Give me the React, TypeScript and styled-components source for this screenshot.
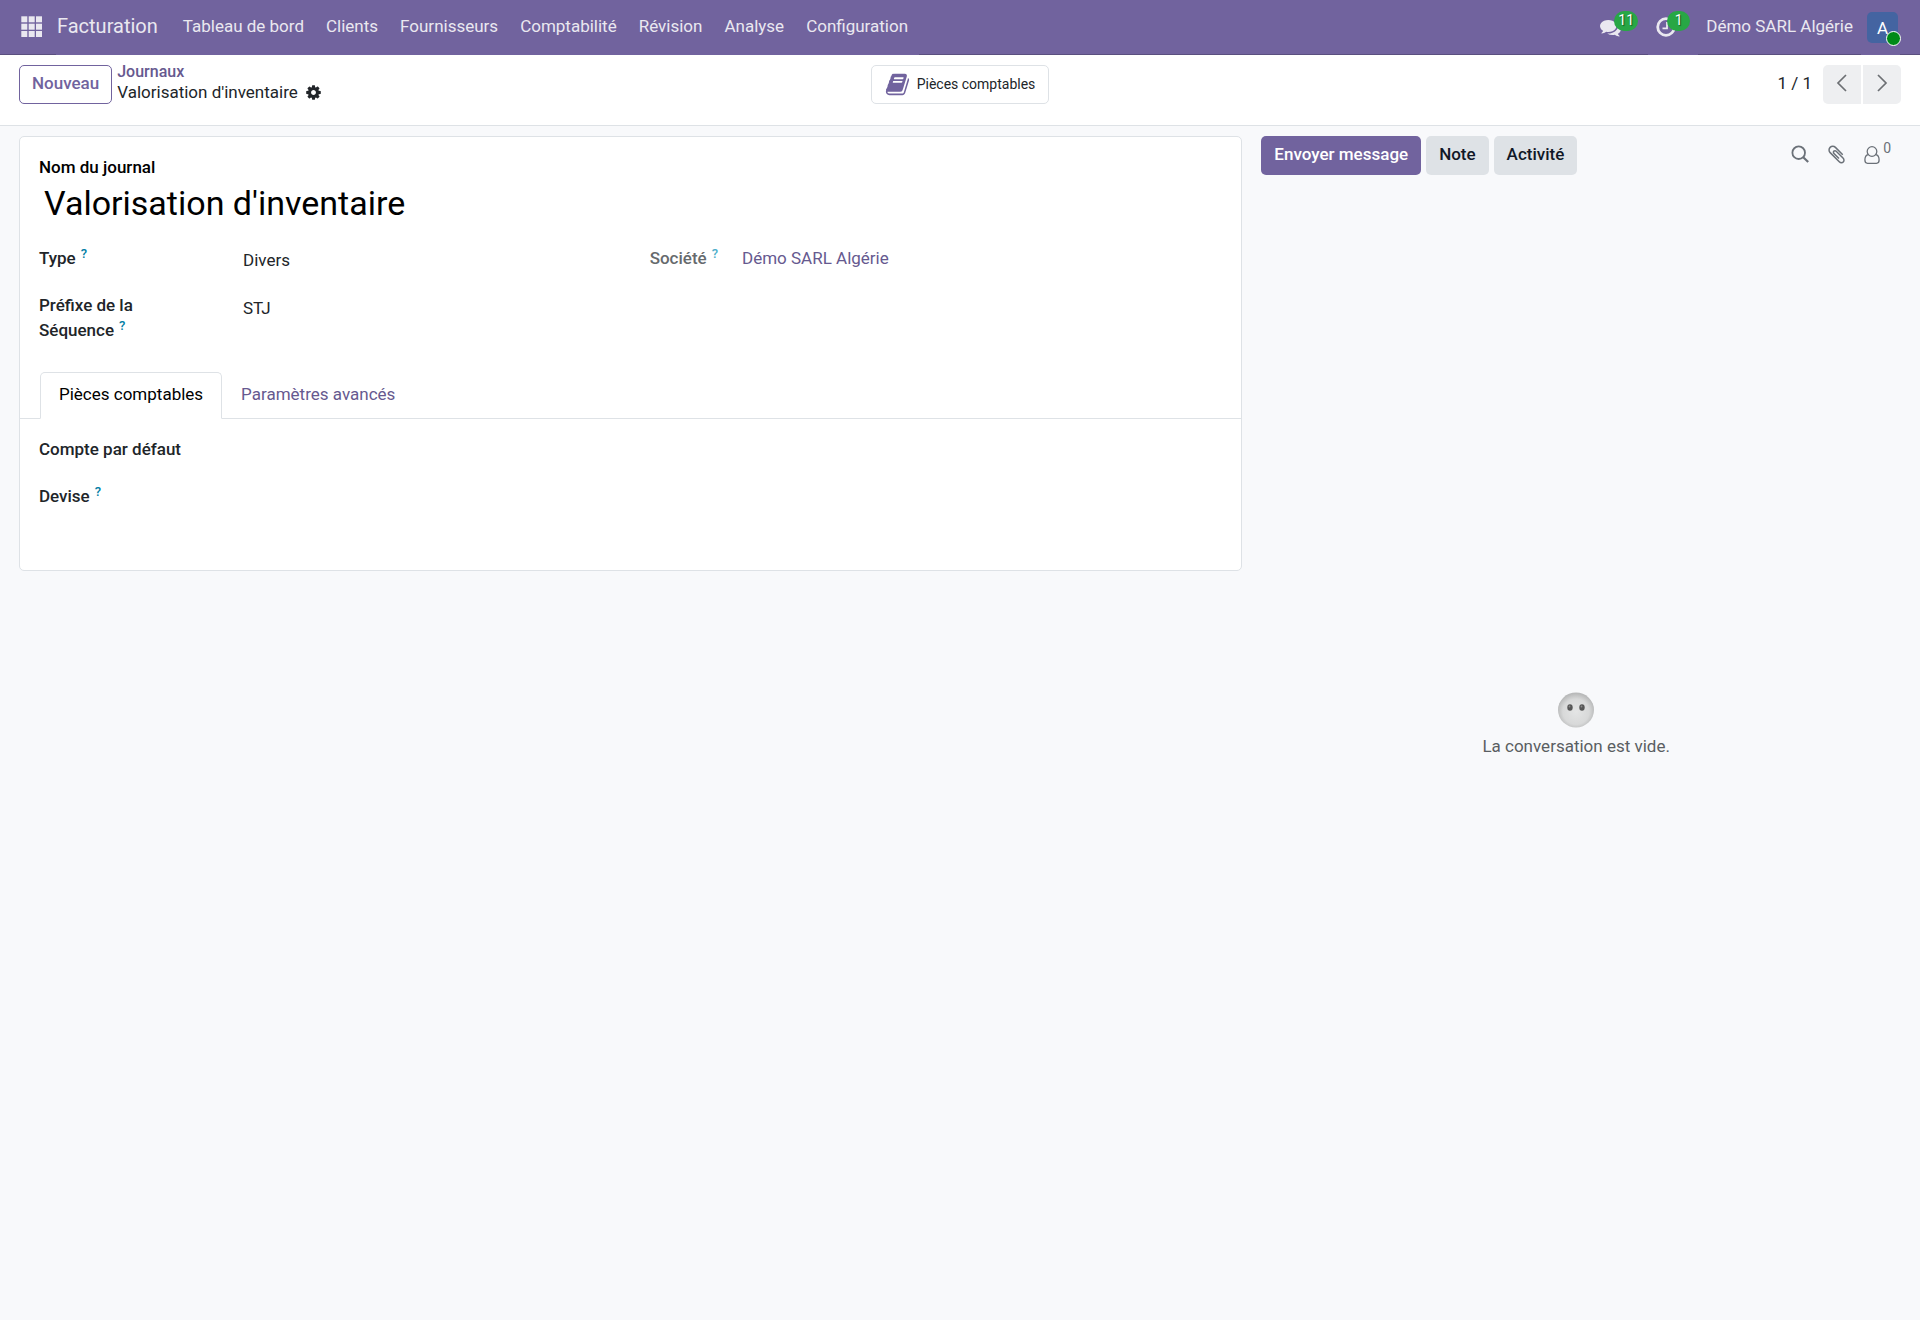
import React from "react";
import styled, { createGlobalStyle } from "styled-components";

const c = {
  brand: "#71639e",
  brandDark: "#5a4f7f",
  link: "#66598f",
  navText: "#eae8f0",
  border: "#dee2e6",
  canvas: "#f8f9fb",
  text: "#212529",
  strong: "#111827",
  green: "#28a745",
};

const GlobalStyle = createGlobalStyle`
  *, *::before, *::after { box-sizing: border-box; }
  body {
    margin: 0;
    background: ${c.canvas};
    color: ${c.text};
    font-family: Roboto, "Liberation Sans", sans-serif;
    font-size: 17px;
    line-height: 25px;
  }
  button, input, select { font: inherit; color: inherit; margin: 0; }
  button { cursor: pointer; }
  a { text-decoration: none; color: ${c.link}; }
  svg { display: block; flex: none; }
`;

const Page = styled.div`
  display: flex;
  flex-direction: column;
  min-height: 100vh;
`;

/* ---------- top navigation ---------- */

const Navbar = styled.nav`
  display: flex;
  height: 55px;
  padding: 0 20px;
  background: ${c.brand};
  box-shadow: inset 0 -1px ${c.brandDark};
`;

const NavButton = styled.button<{ $filled?: boolean }>`
  display: flex;
  align-items: center;
  padding: 0;
  border: 0;
  color: ${c.navText};
  background: ${(p) => (p.$filled ? c.brand : "transparent")};
`;

const AppsButton = styled(NavButton)`
  width: 36px;
  padding-bottom: 2px;
`;

const NavLink = styled.a<{ $brand?: boolean }>`
  display: flex;
  align-items: center;
  padding: ${(p) => (p.$brand ? "0 14px 2px 1px" : "0 11px 2px")};
  font-size: ${(p) => (p.$brand ? 20 : 17)}px;
  color: ${c.navText};
  background: ${c.brand};
`;

const NavRight = styled.div`
  display: flex;
  margin-left: auto;
`;

const Systray = styled(NavButton)`
  padding: 0 0 1px 8px;
  width: ${(p) => (p.$filled ? 50 : 56)}px;
`;

const IconWithBadge = styled.span`
  position: relative;
  display: block;
`;

const Badge = styled.span<{ $left: number }>`
  position: absolute;
  left: ${(p) => p.$left}px;
  top: -6px;
  min-width: 23px;
  height: 20px;
  padding: 0 4px;
  border-radius: 10px;
  background: ${c.green};
  color: #fff;
  font-size: 14px;
  line-height: 18px;
  text-align: center;
  text-shadow: 1px 1px 1px rgba(0, 0, 0, 0.5);
`;

const CompanyButton = styled(NavButton)`
  padding: 0 8px 2px;
`;

const AvatarButton = styled(NavButton)`
  padding: 0 2px 0 6px;
`;

const Avatar = styled.span`
  position: relative;
  display: block;
  width: 31px;
  height: 31px;
  border-radius: 5px;
  background: #4464a1;
  color: #fff;
  text-align: center;
  line-height: 32px;
`;

const Presence = styled.span`
  position: absolute;
  right: -3px;
  bottom: -3px;
  width: 15px;
  height: 15px;
  border: 1px solid #fff;
  border-radius: 50%;
  background: #008a17;
`;

/* ---------- control panel ---------- */

const ControlPanel = styled.header`
  display: grid;
  grid-template-columns: 1fr auto 1fr;
  align-items: start;
  height: 71px;
  padding: 10px 19px 0;
  background: #fff;
  border-bottom: 1px solid ${c.border};
`;

const PanelLeft = styled.div`
  display: flex;
  align-items: flex-start;
  gap: 5px;
`;

const OutlineButton = styled.button`
  height: 39px;
  padding: 0 12px 2px;
  border: 1px solid ${c.brand};
  border-radius: 5px;
  background: #fff;
  color: ${c.brand};
  font-weight: 500;
`;

const Breadcrumb = styled.div`
  display: flex;
  flex-direction: column;
  line-height: 20px;
  margin-top: -3px;
`;

const CrumbLink = styled.a`
  font-size: 16px;
  font-weight: 500;
`;

const Current = styled.div`
  display: flex;
  align-items: center;
  gap: 7px;
`;

const IconButton = styled.button<{ $color?: string }>`
  display: flex;
  align-items: flex-start;
  padding: 0;
  border: 0;
  background: none;
  color: ${(p) => p.$color || c.text};
`;

const StatButton = styled.button`
  display: flex;
  align-items: center;
  gap: 7px;
  height: 39px;
  padding: 0 13px;
  border: 1px solid ${c.border};
  border-radius: 5px;
  background: #fff;
  font-size: 14px;
  color: ${c.text};
  & > svg { color: ${c.brand}; }
`;

const Pager = styled.div`
  display: flex;
  justify-content: flex-end;
  gap: 2px;
`;

const PagerCount = styled.span`
  padding: 6px 9px 0 0;
`;

const PagerButton = styled.button<{ $side: "left" | "right" }>`
  display: flex;
  align-items: center;
  justify-content: center;
  width: 38px;
  height: 39px;
  padding: 0 0 3px;
  border: 0;
  border-radius: ${(p) => (p.$side === "left" ? "5px 0 0 5px" : "0 5px 5px 0")};
  background: #eeeff1;
  color: #6c6f73;
`;

/* ---------- form ---------- */

const Main = styled.main`
  display: grid;
  grid-template-columns: 11fr 6fr;
  flex: 1;
  padding-top: 10px;
`;

const Sheet = styled.form`
  align-self: start;
  margin-left: 19px;
  padding: 18px 0 61px;
  border: 1px solid ${c.border};
  border-radius: 5px;
  background: #fff;
`;

const TitleBlock = styled.div`
  display: flex;
  flex-direction: column;
  padding: 0 19px;
  color: #000;
`;

const Label = styled.label<{ $muted?: boolean }>`
  font-weight: 500;
  color: ${(p) => (p.$muted ? "#666a6d" : "inherit")};
`;

const TitleInput = styled.input`
  width: 100%;
  height: 46px;
  padding: 0 5px;
  border: 0;
  outline: 0;
  background: transparent;
  font-size: 34px;
`;

const Groups = styled.div<{ $tight?: boolean }>`
  display: grid;
  grid-template-columns: 1fr 1fr;
  gap: 38px;
  padding: ${(p) => (p.$tight ? 18 : 20)}px 19px 0;
`;

const Group = styled.div<{ $compact?: boolean }>`
  display: grid;
  grid-template-columns: ${(p) => (p.$compact ? "auto 1fr" : "160px 1fr")};
  column-gap: ${(p) => (p.$compact ? 24 : 39)}px;
  row-gap: 22px;
  align-content: start;
`;

const Help = styled.sup<{ $muted?: boolean }>`
  margin-left: 5px;
  font-size: 13px;
  line-height: 13px;
  vertical-align: 6px;
  color: ${(p) => (p.$muted ? "#4fafca" : "#0180a5")};
`;

const Input = styled.input`
  width: 100%;
  height: 29px;
  padding: 0 5px;
  border: 0;
  outline: 0;
  background: transparent;
  align-self: start;
  margin-bottom: -4px;
`;

const Select = styled(Input).attrs({ as: "select" })`
  appearance: none;
`;

const Tabs = styled.div`
  display: flex;
  margin-top: 29px;
  padding: 0 20px;
  box-shadow: inset 0 -1px ${c.border};
`;

const Tab = styled.button<{ $active?: boolean }>`
  height: 47px;
  padding: 0 18px 3px;
  border: 1px solid ${(p) => (p.$active ? c.border : "transparent")};
  border-bottom-color: ${(p) => (p.$active ? "#fff" : "transparent")};
  border-radius: 5px 5px 0 0;
  background: ${(p) => (p.$active ? "#fff" : "transparent")};
  color: ${(p) => (p.$active ? "#000" : c.link)};
`;

/* ---------- chatter ---------- */

const Chatter = styled.aside`
  display: flex;
  flex-direction: column;
  padding: 0 29px 0 19px;
`;

const ChatterBar = styled.div`
  display: flex;
  gap: 5px;
`;

const ChatterButton = styled.button<{ $primary?: boolean }>`
  height: 39px;
  padding: 0 13px 3px;
  border: 0;
  border-radius: 5px;
  font-weight: 500;
  color: ${(p) => (p.$primary ? "#fff" : c.strong)};
  background: ${(p) => (p.$primary ? c.brand : c.border)};
`;

const ChatterTools = styled.div`
  display: flex;
  gap: 17px;
  margin-left: auto;
  padding-top: 8px;
`;

const Followers = styled.span`
  margin-left: 3px;
  font-size: 14px;
  line-height: 9px;
`;

const EmptyThread = styled.div`
  display: flex;
  flex: 1;
  flex-direction: column;
  align-items: center;
  justify-content: center;
  gap: 5px;
  padding-bottom: 46px;
  color: #5a5e62;
`;

/* ---------- icons ---------- */

const Glyph = ({ d, size }: { d: string; size: number }) => (
  <svg width={size} height={size} viewBox="0 0 1792 1792" fill="currentColor" aria-hidden="true">
    <path d={d} />
  </svg>
);

const BOOK =
  "M1703 478q40 57 18 129l-275 906q-19 64-76.5 107.5t-122.5 43.5h-923q-77 0-148.5-53.5t-99.5-131.5q-24-67-2-127 0-4 3-27t4-37q1-8-3-21.5t-3-19.5q2-11 8-21t16.5-23.5 16.5-23.5q23-38 45-91.5t30-91.5q3-10 .5-30t-.5-28q3-11 17-28t17-23q21-36 42-92t25-90q1-9-2.5-32t.5-28q4-13 22-30.5t22-22.5q19-26 42.5-84.5t27.5-96.5q1-8-3-25.5t-2-26.5q2-8 9-18t18-23 17-21q8-12 16.5-30.5t15-35 16-36 19.5-32 26.5-23.5 36-11.5 47.5 5.5l-1 3q38-9 51-9h761q74 0 114 56t18 130l-274 906q-36 119-71.5 153.5t-128.5 34.5h-869q-27 0-38 15-11 16-1 43 24 70 144 70h923q29 0 56-15.5t35-41.5l300-987q7-22 5-57 38 15 59 43zm-1064 2q-4 13 2 22.5t20 9.5h608q13 0 25.5-9.5t16.5-22.5l21-64q4-13-2-22.5t-20-9.5h-608q-13 0-25.5 9.5t-16.5 22.5zm-83 256q-4 13 2 22.5t20 9.5h608q13 0 25.5-9.5t16.5-22.5l21-64q4-13-2-22.5t-20-9.5h-608q-13 0-25.5 9.5t-16.5 22.5z";
const COMMENTS =
  "M1408 768q0 139-94 257t-256.5 186.5-353.5 68.5q-86 0-176-16-124 88-278 128-36 9-86 16h-3q-11 0-20.5-8t-11.5-21q-1-3-1-6.5t.5-6.5 2-6l2.5-5 3.5-5.5 4-5 4.5-5 4-4.5q5-6 23-25t26-29.5 22.5-29 25-38.5 20.5-44q-124-72-195-177t-71-224q0-139 94-257t256.5-186.5 353.5-68.5 353.5 68.5 256.5 186.5 94 257zm384 256q0 120-71 224.5t-195 176.5q10 24 20.5 44t25 38.5 22.5 29 26 29.5 23 25q1 1 4 4.5t4.5 5 4 5 3.5 5.5l2.5 5 2 6 .5 6.5-1 6.5q-3 14-13 22t-22 7q-50-7-86-16-154-40-278-128-90 16-176 16-271 0-472-132 58 4 88 4 161 0 309-45t264-129q125-92 192-212t67-254q0-77-23-152 129 71 204 178t75 230z";
const COG =
  "M1152 896q0-106-75-181t-181-75-181 75-75 181 75 181 181 75 181-75 75-181zm512-109v222q0 12-8 23t-20 13l-185 28q-19 54-39 91 35 50 107 138 10 12 10 25t-9 23q-27 37-99 108t-94 71q-12 0-26-9l-138-108q-44 23-91 38-16 136-29 186-7 28-36 28h-222q-14 0-24.5-8.5t-11.5-21.5l-28-184q-49-16-90-37l-141 107q-10 9-25 9-14 0-25-11-126-114-165-168-7-10-7-23 0-12 8-23 15-21 51-66.5t54-70.5q-27-50-41-99l-183-27q-13-2-21-12.5t-8-23.5v-222q0-12 8-23t19-13l186-28q14-46 39-92-40-57-107-138-10-12-10-24 0-10 9-23 26-36 98.5-107.5t94.5-71.5q13 0 26 10l138 107q44-23 91-38 16-136 29-186 7-28 36-28h222q14 0 24.5 8.5t11.5 21.5l28 184q49 16 90 37l142-107q9-9 24-9 13 0 25 10 129 119 165 170 7 8 7 22 0 12-8 23-15 21-51 66.5t-54 70.5q26 50 41 98l183 28q13 2 21 12.5t8 23.5z";
const CLIP =
  "M1596 1385q0 117-79 196t-196 79q-135 0-235-100l-777-776q-113-115-113-271 0-159 110-270t269-111q158 0 273 113l605 606q10 10 10 22 0 16-30.5 46.5t-46.5 30.5q-13 0-23-10l-606-607q-79-77-181-77-106 0-179 75t-73 181q0 105 76 181l776 777q63 63 145 63 64 0 106-42t42-106q0-82-63-145l-581-581q-26-24-60-24-29 0-48 19t-19 48q0 32 25 59l410 410q10 10 10 22 0 16-31 47t-47 31q-12 0-22-10l-410-410q-63-61-63-149 0-82 57-139t139-57q88 0 149 63l581 581q100 98 100 235z";

const AppsIcon = () => (
  <svg width="23" height="23" viewBox="0 0 23 23" fill="currentColor" aria-hidden="true">
    {[1.3, 8.7, 16].map((y) =>
      [1.3, 8.7, 16].map((x) => <rect key={`${x}-${y}`} x={x} y={y} width="6" height="6" />)
    )}
  </svg>
);

const ClockIcon = () => (
  <svg width="20" height="20" viewBox="0 0 20 20" fill="none" stroke="currentColor" aria-hidden="true">
    <circle cx="10" cy="10" r="8.3" strokeWidth="2.8" />
    <path d="M11 5v6.4H6.5" strokeWidth="1.8" />
  </svg>
);

const Chevron = ({ d }: { d: string }) => (
  <svg width="18" height="18" viewBox="0 0 18 18" fill="none" stroke="currentColor" strokeWidth="1.7" aria-hidden="true">
    <path d={d} />
  </svg>
);

const SearchIcon = () => (
  <svg width="18" height="20" viewBox="0 -1 18 20" fill="none" stroke="currentColor" strokeWidth="1.8" aria-hidden="true">
    <circle cx="7.7" cy="7.7" r="6.3" />
    <path d="M12.200 12.200l5 4.800" strokeWidth="2.200" />
  </svg>
);

const UserIcon = () => (
  <svg width="16" height="21" viewBox="0 -1.500 16 21" fill="none" stroke="currentColor" strokeWidth="1.300" aria-hidden="true">
    <circle cx="8" cy="6" r="4.800" />
    <path d="M4.300 9.200C1.800 9.600.9 11.900.9 14.600c0 2 1 3.200 2.600 3.200h9c1.600 0 2.600-1.200 2.600-3.200 0-2.700-.9-5-3.400-5.400" />
  </svg>
);

const FaceIcon = () => (
  <svg width="38" height="38" viewBox="0 0 38 38" aria-hidden="true">
    <defs>
      <radialGradient id="face" cx="50%" cy="55%" r="52%">
        <stop offset="0" stopColor="#e4e5e5" />
        <stop offset="0.7" stopColor="#d8d9d9" />
        <stop offset="1" stopColor="#b9baba" />
      </radialGradient>
    </defs>
    <ellipse cx="19" cy="19" rx="18" ry="17.500" fill="url(#face)" />
    <ellipse cx="13" cy="16.500" rx="2.700" ry="3.200" fill="#565656" />
    <ellipse cx="25" cy="16.500" rx="2.700" ry="3.200" fill="#565656" />
    <circle cx="12.500" cy="15.500" r="0.900" fill="#8a8a8a" />
    <circle cx="24.500" cy="15.500" r="0.900" fill="#8a8a8a" />
  </svg>
);

const MENU = ["Tableau de bord", "Clients", "Fournisseurs", "Comptabilité", "Révision", "Analyse", "Configuration"];

export default function App() {
  return (
    <Page>
      <GlobalStyle />
      <Navbar>
        <AppsButton aria-label="Applications"><AppsIcon /></AppsButton>
        <NavLink $brand href="#">Facturation</NavLink>
        {MENU.map((m) => <NavLink key={m} href="#">{m}</NavLink>)}
        <NavRight>
          <Systray aria-label="Messages">
            <IconWithBadge><Glyph d={COMMENTS} size={21} /><Badge $left={14}>11</Badge></IconWithBadge>
          </Systray>
          <Systray $filled aria-label="Activités">
            <IconWithBadge><ClockIcon /><Badge $left={11}>1</Badge></IconWithBadge>
          </Systray>
          <CompanyButton>Démo SARL Algérie</CompanyButton>
          <AvatarButton $filled aria-label="Utilisateur">
            <Avatar>A<Presence /></Avatar>
          </AvatarButton>
        </NavRight>
      </Navbar>

      <ControlPanel>
        <PanelLeft>
          <OutlineButton>Nouveau</OutlineButton>
          <Breadcrumb>
            <CrumbLink href="#">Journaux</CrumbLink>
            <Current>
              <span>Valorisation d'inventaire</span>
              <IconButton aria-label="Actions"><Glyph d={COG} size={17} /></IconButton>
            </Current>
          </Breadcrumb>
        </PanelLeft>
        <StatButton><Glyph d={BOOK} size={25} />Pièces comptables</StatButton>
        <Pager>
          <PagerCount>1 / 1</PagerCount>
          <PagerButton $side="left" aria-label="Précédent"><Chevron d="M13 1L5 9l8 8" /></PagerButton>
          <PagerButton $side="right" aria-label="Suivant"><Chevron d="M5 1l8 8-8 8" /></PagerButton>
        </Pager>
      </ControlPanel>

      <Main>
        <Sheet onSubmit={(e) => e.preventDefault()}>
          <TitleBlock>
            <Label htmlFor="name">Nom du journal</Label>
            <TitleInput id="name" defaultValue="Valorisation d'inventaire" />
          </TitleBlock>
          <Groups>
            <Group>
              <Label htmlFor="type">Type<Help>?</Help></Label>
              <Select id="type"><option>Divers</option></Select>
              <Label htmlFor="code">Préfixe de la Séquence<Help>?</Help></Label>
              <Input id="code" defaultValue="STJ" />
            </Group>
            <Group $compact>
              <Label as="span" $muted>Société<Help $muted>?</Help></Label>
              <a href="#">Démo SARL Algérie</a>
            </Group>
          </Groups>
          <Tabs role="tablist">
            <Tab type="button" role="tab" aria-selected="true" $active>Pièces comptables</Tab>
            <Tab type="button" role="tab" aria-selected="false">Paramètres avancés</Tab>
          </Tabs>
          <Groups $tight>
            <Group>
              <Label htmlFor="account">Compte par défaut</Label>
              <Input id="account" />
              <Label htmlFor="currency">Devise<Help>?</Help></Label>
              <Input id="currency" />
            </Group>
          </Groups>
        </Sheet>

        <Chatter>
          <ChatterBar>
            <ChatterButton $primary>Envoyer message</ChatterButton>
            <ChatterButton>Note</ChatterButton>
            <ChatterButton>Activité</ChatterButton>
            <ChatterTools>
              <IconButton $color="#6b7178" aria-label="Rechercher"><SearchIcon /></IconButton>
              <IconButton $color="#6b7178" aria-label="Joindre des fichiers"><Glyph d={CLIP} size={21} /></IconButton>
              <IconButton $color="#6b7178" aria-label="Abonnés"><UserIcon /><Followers>0</Followers></IconButton>
            </ChatterTools>
          </ChatterBar>
          <EmptyThread>
            <FaceIcon />
            <span>La conversation est vide.</span>
          </EmptyThread>
        </Chatter>
      </Main>
    </Page>
  );
}
